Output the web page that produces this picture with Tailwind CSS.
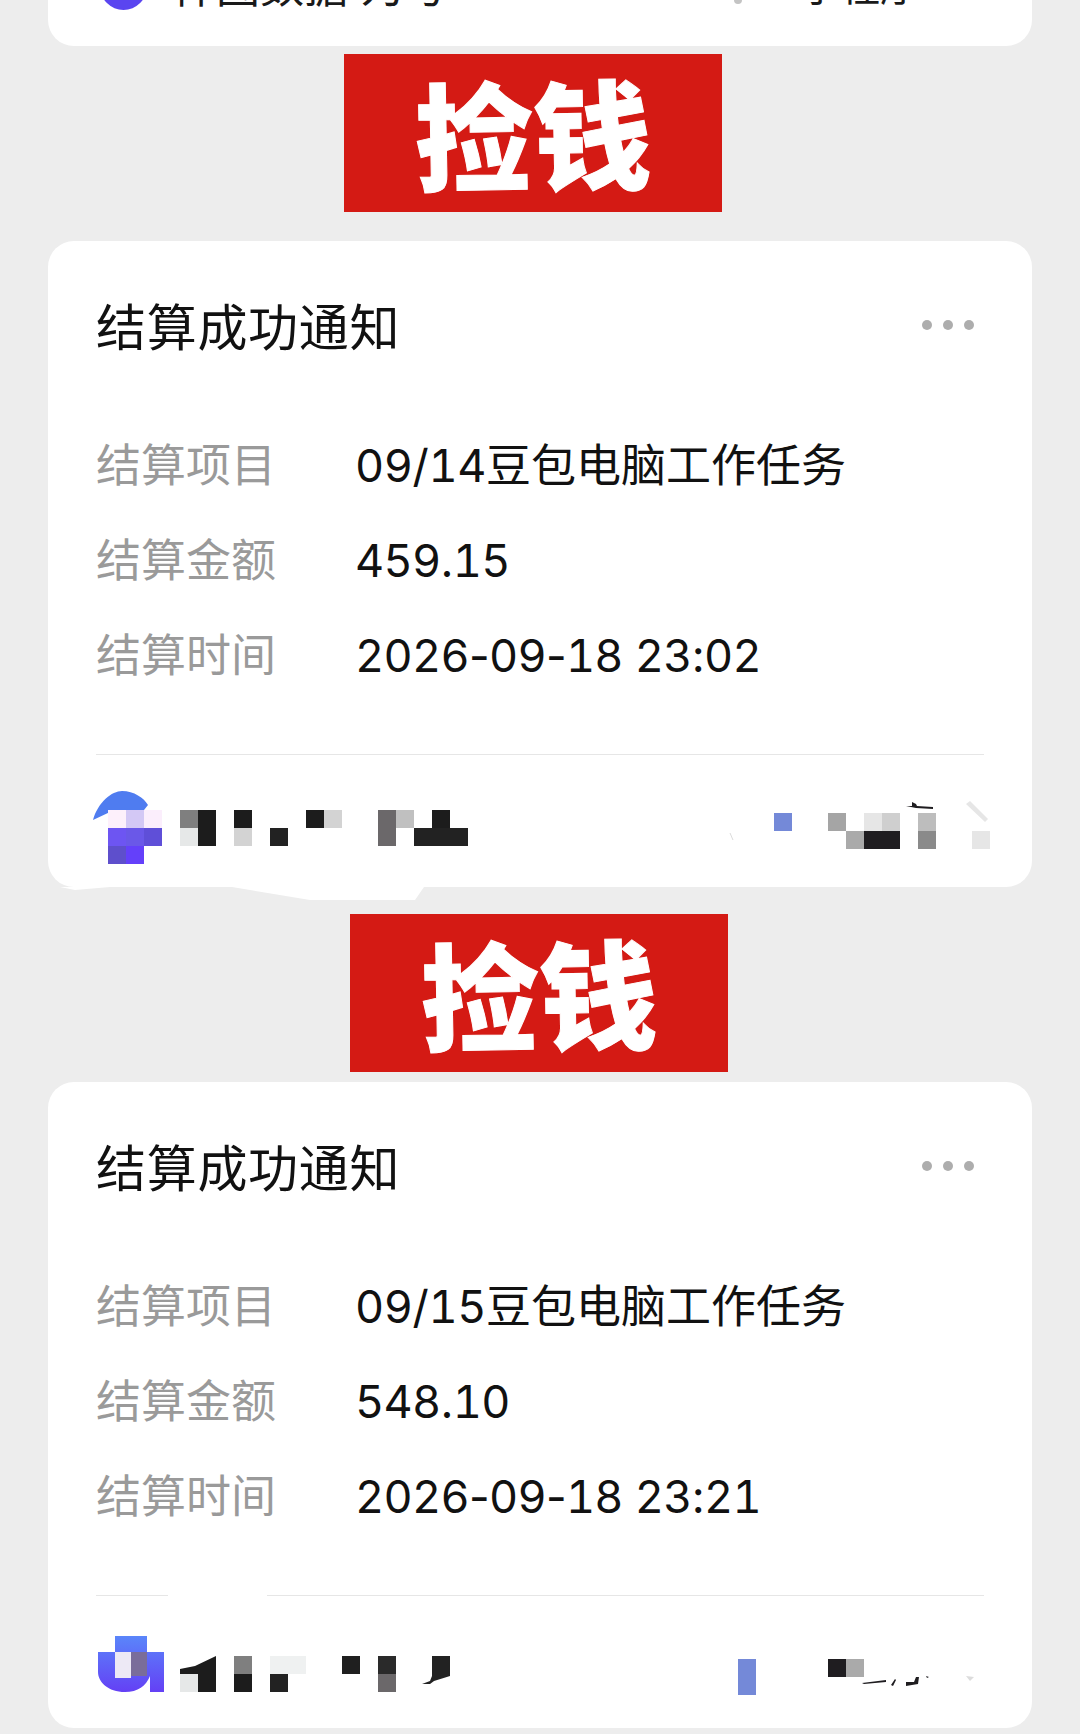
<!DOCTYPE html>
<html lang="zh-CN">
<head>
  <meta charset="UTF-8">
  <title>结算成功通知</title>
  <script src="https://cdn.jsdelivr.net/npm/@tailwindcss/browser@4"></script>
</head>
<body class="bg-[#ededed] font-['Inter','Noto_Sans_CJK_SC',sans-serif]">
  <div class="w-[1080px] h-[1734px] overflow-hidden flex flex-col items-center">

    <!-- card cut off by the top edge -->
    <div class="w-[984px] h-[46px] shrink-0 bg-white rounded-b-[26px]">
      <div class="h-[47px] -mt-[37px] pl-[52px] pr-[112px] flex items-center justify-between text-[44px] leading-none text-[#1a1a1a]">
        <div class="flex items-center gap-[25px]">
          <div class="w-[47px] h-[47px] rounded-full bg-[#5a45f0]"></div>
          <span class="whitespace-nowrap">样图数据 为号</span>
        </div>
        <div class="flex items-center gap-[58px]">
          <div class="w-[8px] h-[34px] rounded-full bg-[#c4c4c4]"></div>
          <span class="text-[40px] whitespace-nowrap">小程序</span>
        </div>
      </div>
    </div>

    <!-- banner 1 -->
    <div class="w-[378px] h-[158px] shrink-0 mt-[8px] -ml-[14px] bg-[#d41a14] flex items-center justify-center overflow-hidden">
      <span class="-mt-[4px] text-[118px] leading-none font-black text-white -rotate-1 [-webkit-text-stroke:1px_white] font-['Noto_Sans_CJK_SC',sans-serif]">捡钱</span>
    </div>

    <!-- card 1 -->
    <div class="relative w-[984px] h-[646px] shrink-0 mt-[29px] bg-white rounded-[26px] px-[48px] pt-[51px] flex flex-col">
      <div class="flex items-center justify-between h-[72px] pr-[10px]">
        <h2 class="text-[50px] leading-[72px] text-[#111] font-normal tracking-[0.7px]">结算成功通知</h2>
        <div class="flex gap-[11px] -mt-[6px]">
          <span class="w-[10px] h-[10px] rounded-full bg-[#adadad]"></span>
          <span class="w-[10px] h-[10px] rounded-full bg-[#adadad]"></span>
          <span class="w-[10px] h-[10px] rounded-full bg-[#adadad]"></span>
        </div>
      </div>
      <dl class="mt-[54px] text-[45px] leading-[95px]">
        <div class="flex h-[95px]"><dt class="w-[259px] text-[#9a9a9a]">结算项目</dt><dd class="text-[#111]"><span class="tracking-[-0.4px]"><span class="tabular-nums">09</span>/<span class="tabular-nums">14</span></span>豆包电脑工作任务</dd></div>
        <div class="flex h-[95px]"><dt class="w-[259px] text-[#9a9a9a]">结算金额</dt><dd class="text-[#111] tracking-[-0.7px]"><span class="tabular-nums">459</span>.<span class="tabular-nums">15</span></dd></div>
        <div class="flex h-[95px]"><dt class="w-[259px] text-[#9a9a9a]">结算时间</dt><dd class="text-[#111] tracking-[-0.7px]"><span class="tabular-nums">2026</span>-<span class="tabular-nums">09</span>-<span class="tabular-nums">18</span> <span class="tabular-nums">23</span>:<span class="tabular-nums">02</span></dd></div>
      </dl>
      <div class="mt-[51px] h-[1px] bg-[#e6e6e6]"></div>
      <!-- mosaic footer, drawn in page coordinates -->
      <svg class="block -mx-[48px] w-[984px] h-[132px] shrink-0" viewBox="48 755 984 132" shape-rendering="crispEdges">
        <path d="M93 820 C98 802 112 791 122 791 C134 791 144 798 148 805 L144 810 L108 810 L110 812 Z" fill="#4f7cf0" shape-rendering="auto"/>
        <rect x="108" y="810" width="18" height="18" fill="#fdf0fb"/>
        <rect x="126" y="810" width="18" height="18" fill="#d3c8f5"/>
        <rect x="144" y="810" width="18" height="18" fill="#fbeefc"/>
        <rect x="108" y="828" width="18" height="18" fill="#6d55f2"/>
        <rect x="126" y="828" width="18" height="18" fill="#6a58e8"/>
        <rect x="144" y="828" width="18" height="18" fill="#5f4fd8"/>
        <rect x="108" y="846" width="18" height="18" fill="#5e4fcc"/>
        <rect x="126" y="846" width="18" height="18" fill="#6440fa"/>

        <rect x="180" y="810" width="18" height="18" fill="#7f7f7f"/>
        <rect x="180" y="828" width="18" height="18" fill="#e6e8e8"/>
        <rect x="198" y="810" width="18" height="36" fill="#1c1c1c"/>
        <rect x="234" y="810" width="18" height="18" fill="#1c1c1c"/>
        <rect x="234" y="828" width="18" height="18" fill="#d3d3d3"/>
        <rect x="270" y="828" width="18" height="18" fill="#222222"/>
        <rect x="306" y="810" width="18" height="18" fill="#1c1c1c"/>
        <rect x="324" y="810" width="18" height="18" fill="#d3d3d3"/>
        <rect x="378" y="810" width="18" height="36" fill="#6b686a"/>
        <rect x="396" y="810" width="18" height="18" fill="#c0c0c0"/>
        <rect x="414" y="828" width="54" height="18" fill="#222222"/>
        <rect x="432" y="810" width="18" height="18" fill="#1c1c1c"/>

        <rect x="774" y="813" width="18" height="18" fill="#7489d8"/>
        <rect x="828" y="813" width="18" height="18" fill="#a5a5a5"/>
        <rect x="846" y="831" width="18" height="18" fill="#aaaaaa"/>
        <rect x="864" y="813" width="18" height="18" fill="#e6e6e6"/>
        <rect x="882" y="813" width="18" height="18" fill="#cfcfcf"/>
        <rect x="864" y="831" width="36" height="18" fill="#1f1d20"/>
        <rect x="918" y="813" width="18" height="18" fill="#bdbdbd"/>
        <rect x="918" y="831" width="18" height="18" fill="#8a8a8a"/>
        <rect x="972" y="831" width="18" height="18" fill="#e6e6e6"/>
        <path d="M906 806 L912 806 L912 802 L916 804 L917 806 L933 807 L933 809 L916 808 Z" fill="#1f1d20" shape-rendering="auto"/>
        <path d="M966 804 L970 801 L988 819 L985 822 Z" fill="#e6e6e6" shape-rendering="auto"/>
        <path d="M730 833 L733 840" stroke="#dcdcdc" stroke-width="1" fill="none" shape-rendering="auto"/>
      </svg>
      <!-- torn white edge under the card -->
      <svg class="absolute left-[12px] top-full w-[376px] h-[14px]" viewBox="60 887 376 14">
        <path d="M60 887 L75 890 L110 887 L232 887 L310 900 L415 900 L424 887 Z" fill="#ffffff"/>
      </svg>
    </div>

    <!-- banner 2 -->
    <div class="w-[378px] h-[158px] shrink-0 mt-[27px] -ml-[2px] bg-[#d41a14] flex items-center justify-center overflow-hidden">
      <span class="-mt-[4px] text-[118px] leading-none font-black text-white -rotate-1 [-webkit-text-stroke:1px_white] font-['Noto_Sans_CJK_SC',sans-serif]">捡钱</span>
    </div>

    <!-- card 2 -->
    <div class="w-[984px] h-[646px] shrink-0 mt-[10px] bg-white rounded-[26px] px-[48px] pt-[51px] flex flex-col">
      <div class="flex items-center justify-between h-[72px] pr-[10px]">
        <h2 class="text-[50px] leading-[72px] text-[#111] font-normal tracking-[0.7px]">结算成功通知</h2>
        <div class="flex gap-[11px] -mt-[6px]">
          <span class="w-[10px] h-[10px] rounded-full bg-[#adadad]"></span>
          <span class="w-[10px] h-[10px] rounded-full bg-[#adadad]"></span>
          <span class="w-[10px] h-[10px] rounded-full bg-[#adadad]"></span>
        </div>
      </div>
      <dl class="mt-[54px] text-[45px] leading-[95px]">
        <div class="flex h-[95px]"><dt class="w-[259px] text-[#9a9a9a]">结算项目</dt><dd class="text-[#111]"><span class="tracking-[-0.4px]"><span class="tabular-nums">09</span>/<span class="tabular-nums">15</span></span>豆包电脑工作任务</dd></div>
        <div class="flex h-[95px]"><dt class="w-[259px] text-[#9a9a9a]">结算金额</dt><dd class="text-[#111] tracking-[-0.7px]"><span class="tabular-nums">548</span>.<span class="tabular-nums">10</span></dd></div>
        <div class="flex h-[95px]"><dt class="w-[259px] text-[#9a9a9a]">结算时间</dt><dd class="text-[#111] tracking-[-0.7px]"><span class="tabular-nums">2026</span>-<span class="tabular-nums">09</span>-<span class="tabular-nums">18</span> <span class="tabular-nums">23</span>:<span class="tabular-nums">21</span></dd></div>
      </dl>
      <div class="mt-[51px] flex h-[1px]">
        <div class="w-[72px] bg-[#e6e6e6]"></div>
        <div class="w-[99px]"></div>
        <div class="flex-1 bg-[#e6e6e6]"></div>
      </div>
      <svg class="block -mx-[48px] w-[984px] h-[132px] shrink-0" viewBox="48 1596 984 132" shape-rendering="crispEdges">
        <defs>
          <linearGradient id="logoBlue" x1="0" y1="0" x2="0" y2="1">
            <stop offset="0" stop-color="#5a86fa"/>
            <stop offset="1" stop-color="#6440f5"/>
          </linearGradient>
        </defs>
        <path d="M98 1652 L115 1652 L115 1636 L147 1636 L147 1652 L164 1652 L164 1692 L150 1692 L150 1676 C146 1686 138 1692 125 1692 C108 1692 98 1682 98 1672 Z" fill="url(#logoBlue)" shape-rendering="auto"/>
        <rect x="115" y="1652" width="16" height="26" fill="#ede9f5"/>
        <rect x="131" y="1652" width="16" height="24" fill="#7a6d9a"/>

        <rect x="180" y="1674" width="18" height="18" fill="#e6e8e8"/>
        <path d="M180 1669 L195 1666 L216 1656 L216 1692 L198 1692 L198 1674 L180 1674 Z" fill="#1c1c1c" shape-rendering="auto"/>
        <rect x="234" y="1656" width="18" height="18" fill="#7f7f7f"/>
        <rect x="234" y="1674" width="18" height="18" fill="#1c1c1c"/>
        <rect x="270" y="1656" width="36" height="18" fill="#eff1f1"/>
        <rect x="270" y="1674" width="18" height="18" fill="#222222"/>
        <rect x="342" y="1656" width="18" height="18" fill="#1f1f1f"/>
        <rect x="378" y="1656" width="18" height="18" fill="#2a2a2a"/>
        <rect x="378" y="1674" width="18" height="18" fill="#6b686a"/>
        <path d="M432 1656 L450 1656 L450 1676 L434 1681 L430 1684 L422 1684 L430 1681 L432 1676 Z" fill="#222222" shape-rendering="auto"/>

        <rect x="738" y="1659" width="18" height="36" fill="#7489d8"/>
        <rect x="828" y="1659" width="18" height="18" fill="#1f1d20"/>
        <rect x="846" y="1659" width="18" height="18" fill="#aaaaaa"/>
        <path d="M862 1683 L886 1680 L886 1682 L864 1684 Z M891 1685 L895 1679 L896 1680 L893 1686 Z M906 1682 L914 1682 L916 1677 L919 1677 L918 1684 L906 1686 Z M926 1676 L929 1677 L927 1678 Z" fill="#1f1d20" shape-rendering="auto"/>
        <path d="M966 1676 L974 1677 L970 1681 Z" fill="#dcdcdc" shape-rendering="auto"/>
      </svg>
    </div>

  </div>
</body>
</html>
